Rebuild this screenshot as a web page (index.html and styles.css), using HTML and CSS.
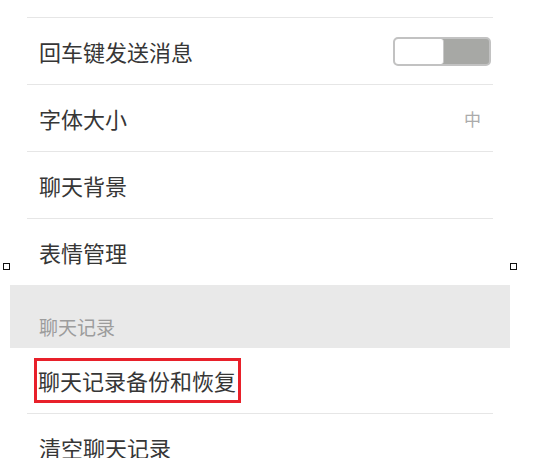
FILE: index.html
```html
<!DOCTYPE html>
<html lang="zh-CN">
<head>
<meta charset="utf-8">
<title>设置</title>
<link rel="stylesheet" href="styles.css">
</head>
<body>
<div class="screen">
  <div class="group">
    <div class="row-top"></div>
    <div class="row">
      <span class="label">回车键发送消息</span>
      <div class="toggle"><div class="knob"></div></div>
    </div>
    <div class="row">
      <span class="label">字体大小</span>
      <span class="value">中</span>
    </div>
    <div class="row">
      <span class="label">聊天背景</span>
    </div>
    <div class="row row-last">
      <span class="label">表情管理</span>
    </div>
  </div>
  <div class="section-header">聊天记录</div>
  <div class="group">
    <div class="row row-hl">
      <span class="label highlight">聊天记录备份和恢复</span>
    </div>
    <div class="row row-last">
      <span class="label">清空聊天记录</span>
    </div>
  </div>
  <span class="handle handle-left"></span>
  <span class="handle handle-right"></span>
</div>
</body>
</html>
```

FILE: styles.css
```css
html, body {
  margin: 0;
  padding: 0;
  background: #ffffff;
}
body {
  font-family: "Noto Sans CJK SC", "Noto Sans", sans-serif;
  color: #363636;
  overflow: hidden;
  height: 458px;
}
.screen {
  position: relative;
  margin-left: 10px;
  width: 500px;
}
.group {
  background: #ffffff;
}
.row-top {
  height: 17px;
  margin: 0 17px;
  border-bottom: 1px solid #e6e6e6;
}
.row {
  margin: 0 17px;
  height: 66px;
  padding: 0 2px 0 12px;
  border-bottom: 1px solid #e6e6e6;
  display: flex;
  align-items: center;
  justify-content: space-between;
}
.row-last {
  border-bottom: none;
}
.row-hl {
  height: 65px;
  padding-left: 7px;
}
.label {
  font-size: 22px;
  line-height: 27px;
  letter-spacing: 0;
}
.value {
  font-size: 17px;
  color: #ababab;
  margin-right: 10px;
}
.highlight {
  border: 3px solid #e8202a;
  padding: 6px 2px 6px 1px;
}
.toggle {
  box-sizing: border-box;
  width: 98px;
  height: 29px;
  border: 2px solid #c2c2c2;
  border-radius: 5px;
  background: #a7a8a5;
  display: flex;
}
.knob {
  width: 48px;
  height: 100%;
  background: #ffffff;
  border-radius: 3px;
  border-right: 1px solid #c8c8c8;
}
.section-header {
  background: #e9e9e9;
  height: 26px;
  padding: 29px 0 8px 29px;
  font-size: 19px;
  line-height: 26px;
  color: #9c9c9c;
}
.handle {
  position: absolute;
  top: 263px;
  width: 5px;
  height: 5px;
  border: 1px solid #111;
  background: #fff;
}
.handle-left {
  left: -7px;
}
.handle-right {
  left: 500px;
}
```
